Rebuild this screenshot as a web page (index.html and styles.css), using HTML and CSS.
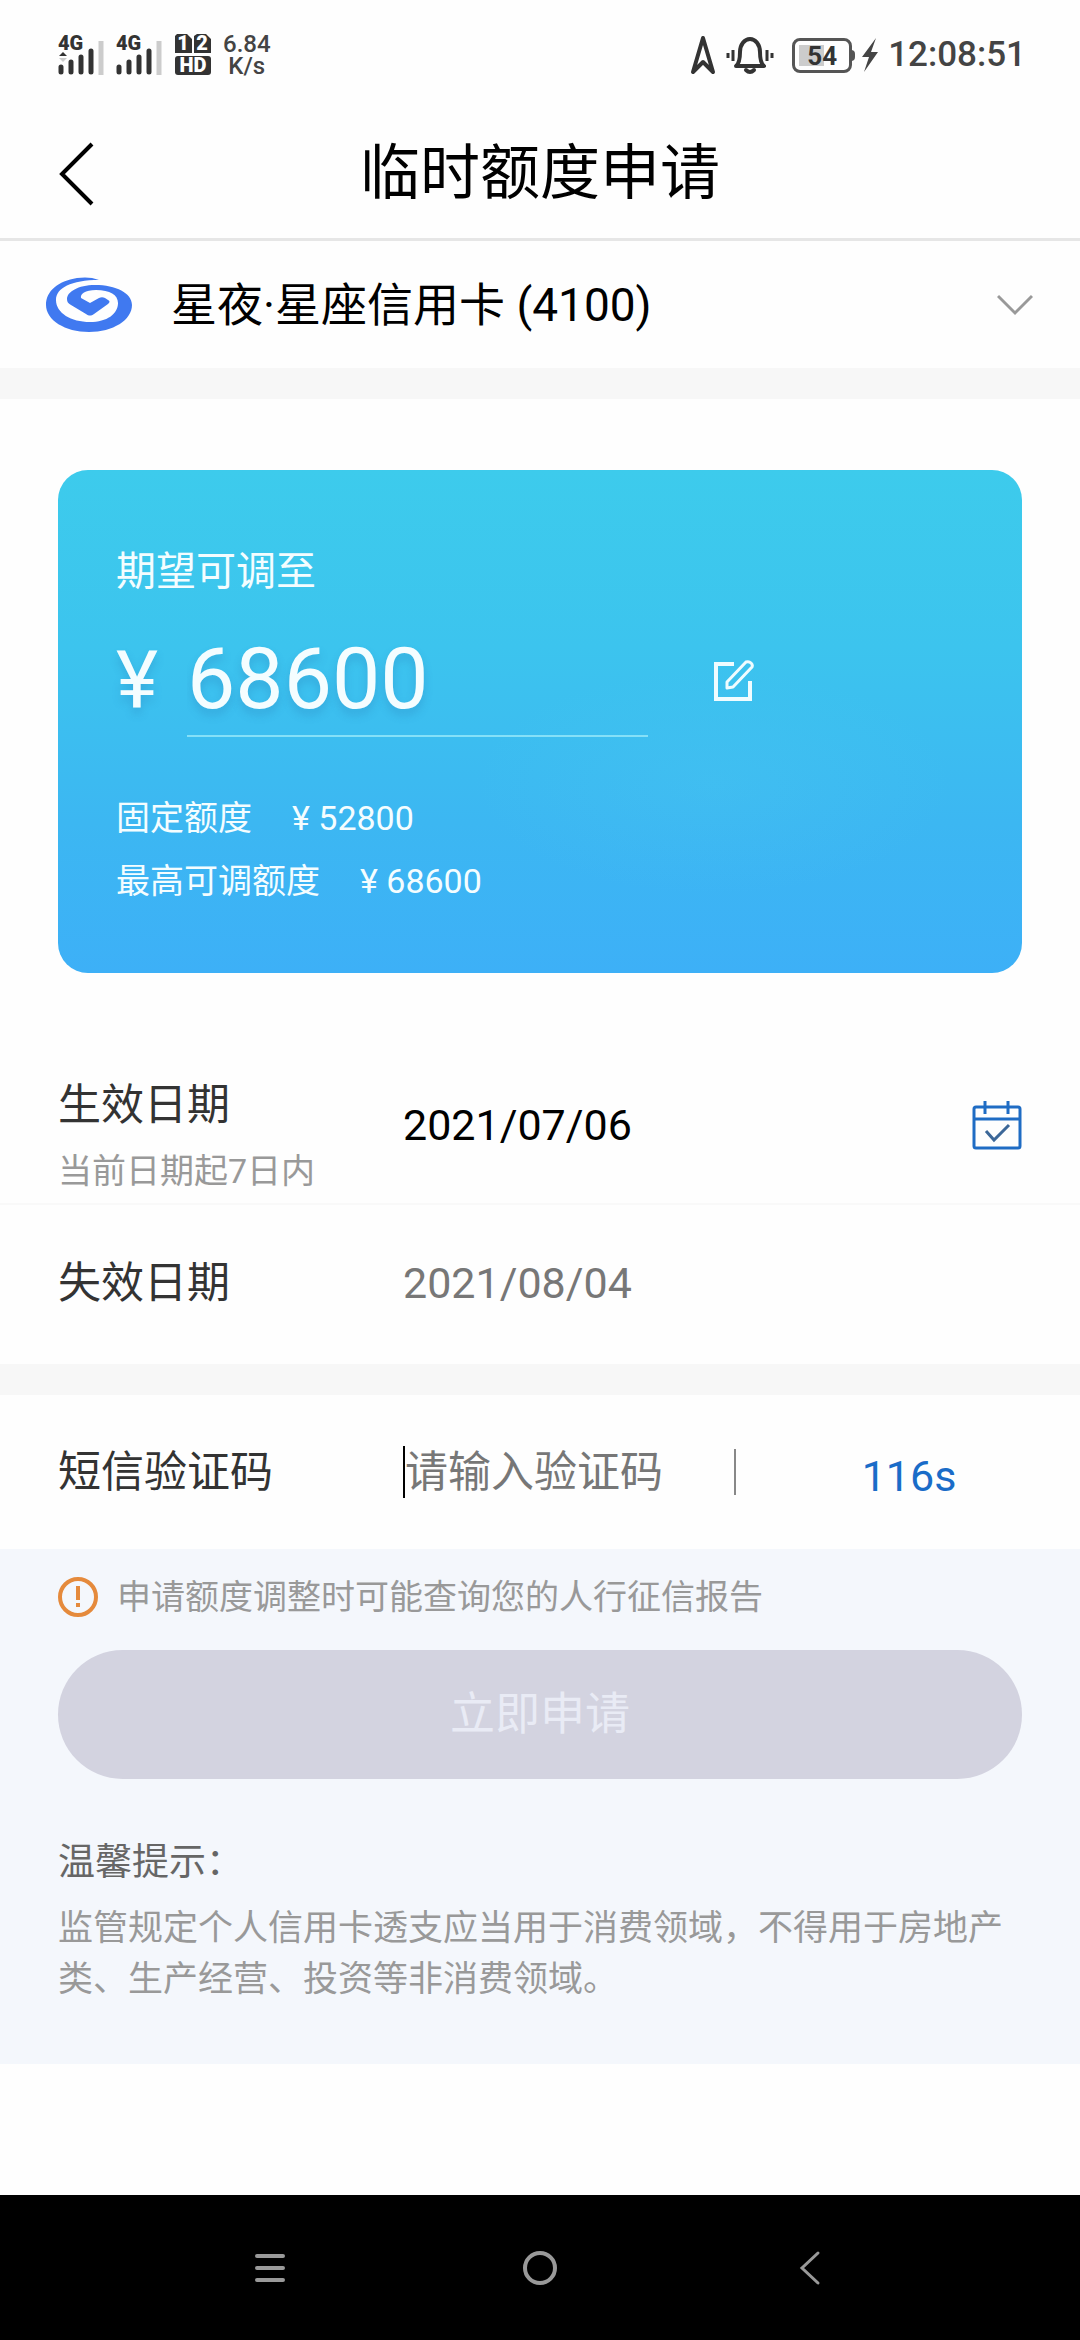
FILE: index.html
```html
<!DOCTYPE html>
<html lang="zh-CN">
<head>
<meta charset="utf-8">
<meta name="viewport" content="width=device-width">
<title>临时额度申请</title>
<link rel="stylesheet" href="styles.css">
</head>
<body>
<div class="status-bar">
  <div class="status-group">
    <svg class="signal" width="47" height="44" viewBox="0 0 47 44">
      <text class="signal-text" x="0" y="17">4G</text>
      <path d="M1 23l4-4 4 4z" fill="#333"/><path d="M1 25h8l-4 4z" fill="#ccc"/>
      <g stroke="#333" stroke-width="5" stroke-linecap="round"><path d="M3 34v5M13 29v10M23 24v15M33 18v21"/><path stroke="#ccc" stroke-linecap="butt" d="M43 8v34"/></g>
    </svg>
    <svg class="signal" width="47" height="44" viewBox="0 0 47 44">
      <text class="signal-text" x="0" y="17">4G</text>
      <g stroke="#333" stroke-width="5" stroke-linecap="round"><path d="M3 34v5M13 29v10M23 24v15M33 18v21"/><path stroke="#ccc" stroke-linecap="butt" d="M43 8v34"/></g>
    </svg>
    <svg width="38" height="44" viewBox="0 0 38 44">
      <path d="M3 1h10l5 5v14H1V3zM23 1h9l5 5v14H20V3z" fill="#333"/>
      <rect x="1" y="23" width="36" height="19" rx="3" fill="#333"/>
      <text class="sim-text" x="9" y="17">1</text><text class="sim-text" x="28" y="17">2</text>
      <text class="sim-text" x="19" y="39">HD</text>
    </svg>
    <div class="speed"><span>6.84</span><span>K/s</span></div>
  </div>
  <div class="status-group status-right">
    <svg width="26" height="40" viewBox="0 0 26 40" fill="none" stroke="#333" stroke-width="4" stroke-linejoin="round"><path d="M13 3L3 37l10-10 10 10z"/></svg>
    <svg width="48" height="40" viewBox="0 0 48 40" fill="none" stroke="#333" stroke-width="4" stroke-linejoin="round" stroke-linecap="round"><path d="M10 31q4-3 4-14a10 13 0 0 1 20 0q0 11 4 14z"/><path d="M20 35q4 4 8 0"/><path stroke-width="3" stroke-linecap="butt" d="M7 15v11M2 18v5M41 15v11M46 18v5"/></svg>
    <div class="battery"><span>54</span></div>
    <svg class="bolt" width="16" height="34" viewBox="0 0 16 34"><path d="M14 0L0 19h7L2 34l14-20H9z" fill="#444"/></svg>
    <time class="clock">12:08:51</time>
  </div>
</div>

<header class="title-bar">
  <button class="icon-button" type="button" aria-label="返回"><svg width="40" height="64" viewBox="0 0 40 64" fill="none" stroke="#000" stroke-width="4"><path d="M34 2L4 32l30 30"/></svg></button>
  <h1 class="title">临时额度申请</h1>
</header>

<main class="content">
  <button class="account" type="button">
    <svg width="88" height="56" viewBox="0 0 88 56"><path fill="#4079f0" d="M54 3C47 0 39 0 32 1 13 4 1 14 1 28c0 15 19 27 43 27s43-12 43-27C87 16 71 8 50 8 33 8 22 15 22 22c0 3 1 4 4 6l15 9c3 2 5 2 8 0l14-10c2-2 2-3 0-4l-3-2c-2-1-4-1-6 0l-9 5-9-5c-1-4 4-8 15-8 14 0 22 5 22 13 0 11-11 19-28 19-19 0-34-9-34-22C11 11 26 3 54 3z"/></svg>
    <span class="account-name">星夜·星座信用卡 (4100)</span>
    <svg width="36" height="22" viewBox="0 0 36 22" fill="none" stroke="#999" stroke-width="3"><path d="M1 2l17 17L35 2"/></svg>
  </button>

  <section class="card-wrap">
    <div class="limit-card">
      <label class="limit-label" for="amount">期望可调至</label>
      <div class="amount-row">
        <span class="currency">¥</span>
        <input class="amount" id="amount" type="text" inputmode="numeric" value="68600">
        <button class="icon-button" type="button" aria-label="编辑额度"><svg width="42" height="42" viewBox="0 0 42 42" fill="none" stroke="#f0fcff" stroke-width="4"><path d="M21 4H3v35h34V21"/><path stroke-width="3" stroke-linejoin="round" d="M14 22L33 2q3-1 5 1t1 4L20 27l-6 1z"/></svg></button>
      </div>
      <dl class="limits">
        <div class="limit-row"><dt>固定额度</dt><dd>¥ 52800</dd></div>
        <div class="limit-row"><dt>最高可调额度</dt><dd>¥ 68600</dd></div>
      </dl>
    </div>
  </section>

  <section class="dates">
    <div class="field field-start">
      <div class="field-label"><label for="start">生效日期</label><small class="hint">当前日期起7日内</small></div>
      <input class="field-input" id="start" type="text" value="2021/07/06" readonly>
      <button class="icon-button" type="button" aria-label="选择日期"><svg width="50" height="50" viewBox="0 0 50 50" fill="none" stroke="#1f6cc4" stroke-width="3"><rect x="2" y="7" width="46" height="41" rx="2"/><path d="M2 19h46M13 1v13M36 1v13"/><path stroke="#3c6798" d="M14 31l8 9 15-15"/></svg></button>
    </div>
    <div class="field field-end">
      <label class="field-label" for="end">失效日期</label>
      <input class="field-input muted" id="end" type="text" value="2021/08/04" readonly>
    </div>
  </section>

  <section class="field sms">
    <label class="field-label" for="code">短信验证码</label>
    <input class="field-input code" id="code" type="text" placeholder="请输入验证码">
    <button class="resend" type="button">116s</button>
  </section>

  <section class="submit-area">
    <p class="notice"><svg width="40" height="40" viewBox="0 0 40 40" fill="none" stroke="#e58a3c" stroke-width="4"><circle cx="20" cy="20" r="18"/><path d="M20 9v14M20 26v4"/></svg>申请额度调整时可能查询您的人行征信报告</p>
    <button class="submit" type="button">立即申请</button>
    <h2 class="tips-title">温馨提示：</h2>
    <p class="tips">监管规定个人信用卡透支应当用于消费领域，不得用于房地产类、生产经营、投资等非消费领域。</p>
  </section>
</main>

<nav class="nav-bar">
  <button class="icon-button" type="button" aria-label="最近任务"><svg width="34" height="34" viewBox="0 0 34 34" stroke="#999" stroke-width="4" stroke-linecap="round"><path d="M4 5h26M4 17h26M4 29h26"/></svg></button>
  <button class="icon-button" type="button" aria-label="主页"><svg width="36" height="36" viewBox="0 0 36 36" fill="none" stroke="#999" stroke-width="4"><circle cx="18" cy="18" r="15"/></svg></button>
  <button class="icon-button" type="button" aria-label="返回"><svg width="34" height="36" viewBox="0 0 34 36" fill="none" stroke="#999" stroke-width="3" stroke-linecap="round"><path d="M25 3L9 18l16 15"/></svg></button>
</nav>
</body>
</html>
```
FILE: styles.css
```css
* { box-sizing: border-box; margin: 0; padding: 0; }

body {
  display: flex;
  flex-direction: column;
  min-height: 100vh;
  background: #fefefe;
  color: #333;
  font-family: Roboto, "Noto Sans CJK SC", sans-serif;
  font-size: 43px;
  line-height: 52px;
}

button, input {
  border: 0;
  background: none;
  color: inherit;
  font: inherit;
  outline: none;
}

svg { display: block; flex: none; }

.icon-button { display: flex; flex: none; }

/* System status bar */
.status-bar {
  display: flex;
  justify-content: space-between;
  align-items: center;
  height: 110px;
  padding: 0 54px 0 58px;
}

.status-group { display: flex; align-items: center; gap: 11px; }
.status-right { gap: 10px; }

.signal-text { font: 900 20px Roboto, sans-serif; fill: #333; }
.sim-text { font: 900 20px Roboto, sans-serif; fill: #fff; text-anchor: middle; }

.speed {
  display: flex;
  flex-direction: column;
  align-items: center;
  color: #444;
  font-size: 24px;
  font-weight: 500;
  line-height: 22px;
}

.battery {
  position: relative;
  width: 60px;
  height: 35px;
  margin-left: 8px;
  border: 3px solid #555;
  border-radius: 8px;
  background: linear-gradient(#ccc, #ccc) 4px 4px / 25px 21px no-repeat;
  color: #333;
  font-size: 26px;
  font-weight: 700;
  line-height: 30px;
  text-align: center;
}

.battery::after {
  content: "";
  position: absolute;
  top: 9px;
  right: -6px;
  width: 4px;
  height: 11px;
  border-radius: 0 4px 4px 0;
  background: #555;
}

.clock { color: #444; font-size: 35px; font-weight: 500; }

/* Page title */
.title-bar {
  display: grid;
  grid-template-columns: 1fr auto 1fr;
  align-items: center;
  height: 131px;
  padding: 0 58px;
  border-bottom: 3px solid #e6e6e6;
}

.title { color: #000; font-size: 60px; font-weight: 400; line-height: 80px; }

.content { flex: 1; }

/* Selected card */
.account {
  display: flex;
  align-items: center;
  width: 100%;
  height: 158px;
  padding: 0 47px 0 45px;
  border-bottom: 31px solid #f7f7f7;
  text-align: left;
}

.account-name { flex: 1; padding-left: 38px; color: #000; font-size: 46px; }

/* Limit card */
.card-wrap { padding: 71px 58px 73px; }

.limit-card {
  height: 503px;
  padding: 76px 58px;
  border-radius: 30px;
  background:
    radial-gradient(ellipse at 68% 62%, rgba(80, 205, 240, 0.2), transparent 240px),
    linear-gradient(#3dcbec, #3cc4ee 35%, #3cb7f2 70%, #3db0f7);
  color: #f4fdff;
}

.limit-label { display: block; font-size: 40px; }

.amount-row {
  display: flex;
  align-items: center;
  height: 112px;
  margin-top: 27px;
  text-shadow: 0 6px 8px rgba(40, 120, 180, 0.3);
}

.currency { width: 71px; font-size: 80px; }

.amount {
  width: 461px;
  height: 112px;
  margin-right: 65px;
  padding-bottom: 4px;
  border-bottom: 2px solid #85e0f8;
  font-size: 86px;
  text-shadow: inherit;
}

.limits { margin-top: 55px; font-size: 34px; }
.limit-row { display: flex; gap: 40px; height: 63px; }

/* Form rows */
.field { display: flex; align-items: center; padding: 0 58px; }
.field-label { flex: none; width: 345px; }
.field-input { flex: 1; min-width: 0; height: 52px; color: #000; }
.field-input.muted { color: #777; }

.dates { border-bottom: 31px solid #f7f7f7; }
.field-start { height: 157px; }
.field-start .field-label { padding-top: 26px; }
.field-end { height: 161px; padding-bottom: 3px; border-top: 2px solid #f9f9f9; }

.hint {
  display: block;
  margin-top: 14px;
  color: #999;
  font-size: 34px;
}

.sms { height: 154px; }

.code { flex: none; width: 280px; border-left: 2px solid #000; }
.code::placeholder { color: #777; opacity: 1; }

.resend {
  flex: 1;
  height: 46px;
  margin-left: 51px;
  padding: 4px 0 0 60px;
  border-left: 2px solid #888;
  color: #1a6cc8;
  line-height: 46px;
}

/* Submit area */
.submit-area { padding: 22px 58px 59px; background: #f4f7fc; }

.notice {
  display: flex;
  align-items: center;
  gap: 19px;
  color: #999;
  font-size: 34px;
}

.submit {
  width: 100%;
  height: 129px;
  margin-top: 27px;
  border-radius: 65px;
  background: #d3d3e0;
  color: #e9ebf5;
  font-size: 45px;
}

.tips-title {
  margin-top: 58px;
  color: #666;
  font-size: 37px;
  font-weight: 400;
}

.tips { margin-top: 14px; color: #999; font-size: 35px; line-height: 51px; }

/* System navigation */
.nav-bar {
  display: flex;
  justify-content: space-around;
  align-items: center;
  height: 145px;
  padding: 0 135px;
  background: #000;
}
```
